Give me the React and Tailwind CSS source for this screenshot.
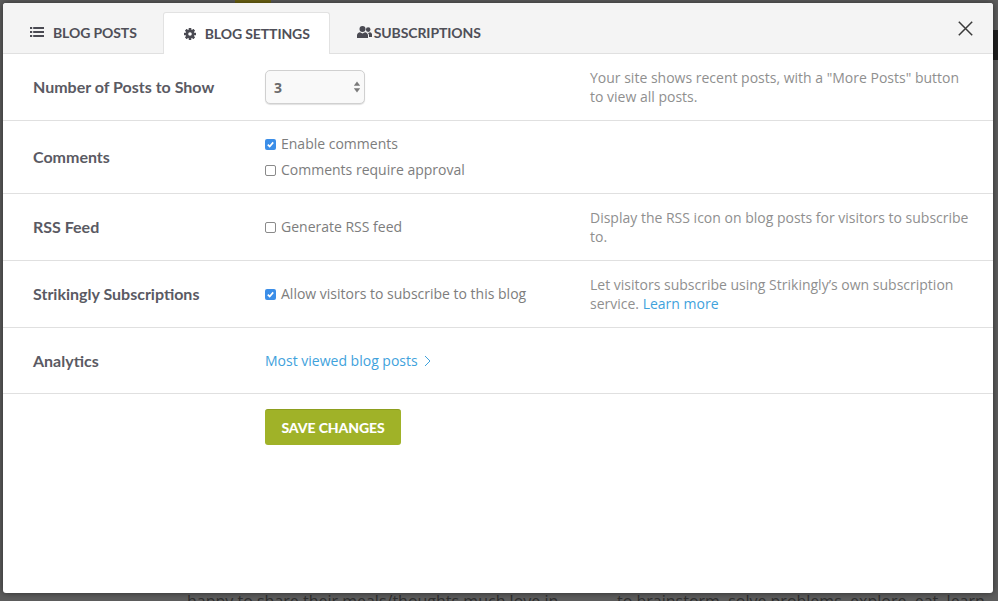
import React from "react";

const labelFont = "font-['Lato',sans-serif]";

function ListIcon() {
  return (
    <svg width="14" height="12" viewBox="0 0 14 12" fill="#4a4a52" className="shrink-0">
      <rect x="0" y="1" width="2.2" height="2" />
      <rect x="3.2" y="1" width="10.8" height="2" />
      <rect x="0" y="5" width="2.2" height="2" />
      <rect x="3.2" y="5" width="10.8" height="2" />
      <rect x="0" y="9" width="2.2" height="2" />
      <rect x="3.2" y="9" width="10.8" height="2" />
    </svg>
  );
}

function GearIcon() {
  return (
    <svg width="12" height="12" viewBox="0 0 12 12" className="shrink-0">
      <g fill="#4a4a52">
        <circle cx="6" cy="6" r="4.4" />
        <rect x="4.7" y="0" width="2.6" height="12" rx="0.4" />
        <rect x="4.7" y="0" width="2.6" height="12" rx="0.4" transform="rotate(45 6 6)" />
        <rect x="4.7" y="0" width="2.6" height="12" rx="0.4" transform="rotate(90 6 6)" />
        <rect x="4.7" y="0" width="2.6" height="12" rx="0.4" transform="rotate(135 6 6)" />
      </g>
      <circle cx="6" cy="6" r="1.8" fill="#ffffff" />
    </svg>
  );
}

function UsersIcon() {
  return (
    <svg width="15" height="12" viewBox="0 0 15 12" fill="#4a4a52" className="shrink-0">
      <circle cx="5.5" cy="3" r="3" />
      <path d="M0 12V9.2C0 7.4 1.6 6.4 3 6.2L5.5 7.6L8 6.2C9.4 6.4 11 7.4 11 9.2V12Z" />
      <circle cx="11.2" cy="3.6" r="2.3" />
      <path d="M9.6 6.2L11.2 7L13 6.2C14 6.4 15 7.2 15 8.6V11H12V9.2C12 7.9 11 6.9 9.6 6.2Z" />
    </svg>
  );
}

function Tab({ icon, label, active, gap }) {
  return (
    <div
      className={`flex items-center h-[42px] ${gap} ${
        active
          ? "bg-white border border-b-0 border-[#e2e2e2] rounded-t-[3px] px-[20px] -mb-px h-[42px] w-[167px]"
          : "px-[27px]"
      }`}
    >
      {icon}
      <span className={`${labelFont} text-[14px] font-bold text-[#4f4f58] tracking-[-0.1px] whitespace-nowrap`}>
        {label}
      </span>
    </div>
  );
}

function Row({ h, label, children, help, border = true }) {
  return (
    <div className={`flex items-center ${h} ${border ? "border-b border-[#e0e0e0]" : ""}`}>
      <div className={`w-[262px] shrink-0 pl-[30px] ${labelFont} text-[16px] font-bold text-[#5a5a63] whitespace-nowrap`}>
        {label}
      </div>
      <div className="w-[325px] shrink-0">{children}</div>
      {help && <div className="w-[380px] text-[14px] leading-[19px] text-[#8f8f8f]">{help}</div>}
    </div>
  );
}

function Check({ checked, label }) {
  return (
    <label className="flex items-center gap-[5px] text-[14px] leading-[20px] text-[#7d7d7d] whitespace-nowrap">
      <span
        className={`flex items-center justify-center w-[11px] h-[11px] rounded-[2px] shrink-0 ${
          checked ? "bg-[#3b8ee8]" : "bg-white border border-[#8a8a8a]"
        }`}
      >
        {checked && (
          <svg width="9" height="9" viewBox="0 0 9 9" fill="none" stroke="#ffffff" strokeWidth="1.7">
            <path d="M1.8 4.6L3.7 6.5L7.2 2.4" />
          </svg>
        )}
      </span>
      {label}
    </label>
  );
}

export default function App() {
  return (
    <div className="relative w-[998px] h-[601px] overflow-hidden bg-[#5c5c5c] font-['Open_Sans',sans-serif]">
      <div className="absolute left-[187px] top-[590px] whitespace-nowrap text-[16px] leading-[22px] text-[#2e2e2e]">
        happy to share their meals/thoughts much love in
      </div>
      <div className="absolute left-[617px] top-[590px] whitespace-nowrap text-[16px] leading-[22px] text-[#2e2e2e]">
        to brainstorm, solve problems, explore, eat, learn
      </div>
      <div className="absolute left-[235px] top-0 w-[36px] h-[3px] bg-[#6e6413]" />
      <div className="absolute left-[993px] top-[30px] w-[5px] h-[30px] bg-[#1f1f1f]" />

      <div className="absolute left-[3px] top-[3px] w-[990px] h-[590px] bg-white rounded-[3px] shadow-[0_0_6px_rgba(0,0,0,0.5)] overflow-hidden">
        <div className="flex items-end h-[51px] bg-[#f4f4f4] border-b border-[#e0e0e0] relative">
          <Tab icon={<ListIcon />} label="BLOG POSTS" gap="gap-[9px]" />
          <div className="-ml-[1px]">
            <Tab icon={<GearIcon />} label="BLOG SETTINGS" gap="gap-[9px]" active />
          </div>
          <Tab icon={<UsersIcon />} label="SUBSCRIPTIONS" gap="gap-[2px]" />
          <svg
            className="absolute right-[20px] top-[18px]"
            width="15"
            height="15"
            viewBox="0 0 15 15"
            fill="none"
            stroke="#3a3a3a"
            strokeWidth="1.5"
          >
            <path d="M0.8 0.8L14.2 14.2M14.2 0.8L0.8 14.2" />
          </svg>
        </div>

        <Row
          h="h-[67px]"
          label="Number of Posts to Show"
          help={<>Your site shows recent posts, with a "More Posts" button to view all posts.</>}
        >
          <div className="flex items-center justify-between w-[100px] h-[34px] border border-[#d0d0d0] rounded-[5px] bg-[#f9f9f9] shadow-[0_1px_1px_rgba(0,0,0,0.12)] pl-[8px] pr-[3px]">
            <span className="text-[14px] font-bold text-[#6a6a6a]">3</span>
            <svg width="8" height="12" viewBox="0 0 8 12" fill="#7a7a7a">
              <path d="M4 0.5L7.2 4.8H0.8Z" />
              <path d="M4 11.5L7.2 7.2H0.8Z" />
            </svg>
          </div>
        </Row>

        <Row h="h-[73px]" label="Comments">
          <div className="flex flex-col gap-[6px]">
            <Check checked label="Enable comments" />
            <Check label="Comments require approval" />
          </div>
        </Row>

        <Row
          h="h-[67px]"
          label="RSS Feed"
          help="Display the RSS icon on blog posts for visitors to subscribe to."
        >
          <Check label="Generate RSS feed" />
        </Row>

        <Row
          h="h-[67px]"
          label="Strikingly Subscriptions"
          help={
            <>
              Let visitors subscribe using Strikingly’s own subscription service.{" "}
              <span className="text-[#3fa2dc]">Learn more</span>
            </>
          }
        >
          <Check checked label="Allow visitors to subscribe to this blog" />
        </Row>

        <Row h="h-[66px]" label="Analytics">
          <div className="flex items-center gap-[6px] text-[14px] text-[#3fa2dc] whitespace-nowrap">
            Most viewed blog posts
            <svg width="7" height="12" viewBox="0 0 7 12" fill="none" stroke="#3fa2dc" strokeWidth="1">
              <path d="M1 1L6 6L1 11" />
            </svg>
          </div>
        </Row>

        <div className="pl-[262px] pt-[15px]">
          <div className={`flex items-center justify-center w-[136px] h-[36px] rounded-[3px] bg-[#a0b228] border-t border-[#8d9e1f] ${labelFont} text-[14px] font-black text-white tracking-[-0.1px]`}>
            SAVE CHANGES
          </div>
        </div>
      </div>
    </div>
  );
}
